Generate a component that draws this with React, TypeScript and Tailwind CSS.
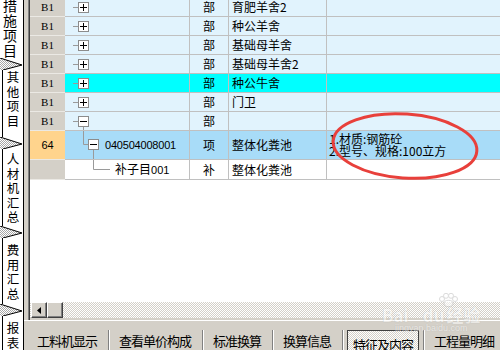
import React, { ReactNode } from 'react';

const cjk = "font-['Noto_Sans_CJK_SC',sans-serif]";
const latin = "font-['Liberation_Sans','Noto_Sans_CJK_SC',sans-serif]";
const dither =
  'bg-[repeating-conic-gradient(#d4d0c8_0%_25%,#ffffff_0%_50%)] bg-[length:2px_2px]';

// little +/- box of the tree column
const Box = ({ x, y, minus }: { x: number; y: number; minus?: boolean }) => (
  <g>
    <rect x={x + 0.5} y={y + 0.5} width={10} height={10} fill="#fff" stroke="#8c8c8c" />
    <line x1={x + 2} x2={x + 9} y1={y + 5.5} y2={y + 5.5} stroke="#000" />
    {!minus && <line x1={x + 5.5} x2={x + 5.5} y1={y + 2} y2={y + 9} stroke="#000" />}
  </g>
);

type TreeKind = 'plus' | 'minus' | 'item' | 'sub';

const Tree = ({ kind, text }: { kind: TreeKind; text?: string }) => {
  const line = '#9a9a9a';
  return (
    <>
      <svg className="absolute left-0 top-0" width={124} height={28}>
        {(kind === 'plus' || kind === 'minus') && (
          <>
            <line x1={8} x2={13} y1={9.5} y2={9.5} stroke={line} />
            {kind === 'minus' && <line x1={18.5} x2={18.5} y1={15} y2={18} stroke={line} />}
            <Box x={13} y={4} minus={kind === 'minus'} />
          </>
        )}
        {kind === 'item' && (
          <>
            <line x1={18.5} x2={18.5} y1={0} y2={13.5} stroke={line} />
            <line x1={18.5} x2={23} y1={13.5} y2={13.5} stroke={line} />
            <line x1={28.5} x2={28.5} y1={19} y2={28} stroke={line} />
            <Box x={23} y={8} minus />
          </>
        )}
        {kind === 'sub' && (
          <>
            <line x1={28.5} x2={28.5} y1={0} y2={9.5} stroke={line} />
            <line x1={28.5} x2={45} y1={9.5} y2={9.5} stroke={line} />
          </>
        )}
      </svg>
      {kind === 'item' && (
        <span className={`relative pl-[40px] text-[11px] tracking-[-0.2px] ${latin}`}>{text}</span>
      )}
      {kind === 'sub' && (
        <span className={`relative pl-[50px] text-[12px] ${cjk}`}>
          补子目<span className={`text-[11px] ${latin}`}>001</span>
        </span>
      )}
    </>
  );
};

type Row = {
  num: string;
  numBg: string;
  bg: string;
  h: string;
  tree: TreeKind;
  code?: string;
  unit: string;
  name: string;
  feat?: ReactNode;
};

const blue = 'bg-[#e1f3fd]';
const rows: Row[] = [
  { num: 'B1', numBg: 'bg-[#d4d0c8]', bg: blue, h: 'h-[19px]', tree: 'plus', unit: '部', name: '育肥羊舍2' },
  { num: 'B1', numBg: 'bg-[#d4d0c8]', bg: blue, h: 'h-[19px]', tree: 'plus', unit: '部', name: '种公羊舍' },
  { num: 'B1', numBg: 'bg-[#d4d0c8]', bg: blue, h: 'h-[19px]', tree: 'plus', unit: '部', name: '基础母羊舍' },
  { num: 'B1', numBg: 'bg-[#d4d0c8]', bg: blue, h: 'h-[19px]', tree: 'plus', unit: '部', name: '基础母羊舍2' },
  { num: 'B1', numBg: 'bg-[#d4d0c8]', bg: 'bg-[#00ffff]', h: 'h-[19px]', tree: 'plus', unit: '部', name: '种公牛舍' },
  { num: 'B1', numBg: 'bg-[#d4d0c8]', bg: blue, h: 'h-[19px]', tree: 'plus', unit: '部', name: '门卫' },
  { num: 'B1', numBg: 'bg-[#d4d0c8]', bg: blue, h: 'h-[19px]', tree: 'minus', unit: '部', name: '' },
  {
    num: '64',
    numBg: 'bg-[#ffd48d]',
    bg: 'bg-[#a8dcf8]',
    h: 'h-[29px]',
    tree: 'item',
    code: '040504008001',
    unit: '项',
    name: '整体化粪池',
    feat: (
      <>
        <span>1.材质:钢筋砼</span>
        <span>2.型号、规格:100立方</span>
      </>
    ),
  },
  { num: '', numBg: 'bg-[#d4d0c8]', bg: 'bg-white', h: 'h-[20px]', tree: 'sub', unit: '补', name: '整体化粪池' },
];

const GridRow = ({ r }: { r: Row }) => (
  <div className={`flex ${r.h}`}>
    <div
      className={`w-[35px] shrink-0 flex items-center justify-center border-b border-[#ebe9e4] ${r.numBg} ${
        r.num === 'B1' ? "font-['Liberation_Serif',serif] text-[11px]" : `${latin} text-[11px]`
      }`}
    >
      {r.num}
    </div>
    <div className={`relative w-[125px] shrink-0 flex items-center border-b border-r border-[#c0c0c0] ${r.bg}`}>
      <Tree kind={r.tree} text={r.code} />
    </div>
    <div className={`w-[39px] shrink-0 flex items-center justify-center border-b border-r border-[#c0c0c0] text-[12px] ${r.bg}`}>
      {r.unit}
    </div>
    <div className={`w-[98px] shrink-0 flex items-center pl-[3px] border-b border-r border-[#c0c0c0] text-[12px] ${r.bg}`}>
      {r.name}
    </div>
    <div className={`flex-1 flex flex-col justify-center pl-[2px] border-b border-[#c0c0c0] text-[12px] leading-[12px] ${r.bg}`}>
      {r.feat}
    </div>
  </div>
);

const Chevron = () => (
  <svg width={23} height={12} className="shrink-0 block">
    <defs>
      <pattern id="dz" width={2} height={2} patternUnits="userSpaceOnUse">
        <rect width={2} height={2} fill="#fff" />
        <rect width={1} height={1} fill="#a8a8a8" />
        <rect x={1} y={1} width={1} height={1} fill="#a8a8a8" />
      </pattern>
    </defs>
    <polygon points="0,0 22,7 3,12 0,12" fill="url(#dz)" />
    <line x1={0} y1={0} x2={22} y2={7} stroke="#000" />
    <line x1={22} y1={7} x2={3} y2={12} stroke="#000" />
  </svg>
);

const SideTab = ({ text, h, pt }: { text: string; h: string; pt: string }) => (
  <div className={`${h} shrink-0 ml-[2px] border-l border-black flex flex-col items-center ${pt} text-[12.5px] leading-[14.5px]`}>
    {text.split('').map((c, i) => (
      <span key={i}>{c}</span>
    ))}
  </div>
);

const SideTabs = () => (
  <div className="w-[24px] h-full shrink-0 flex flex-col overflow-hidden bg-white border-r border-black">
    <div className="h-[58px] shrink-0 flex flex-col items-center -mt-[2px] pr-[3px] text-[14px] leading-[15px]">
      {'措施项目'.split('').map((c, i) => (
        <span key={i}>{c}</span>
      ))}
    </div>
    <div className="h-[2px] shrink-0" />
    <Chevron />
    <SideTab text="其他项目" h="h-[67px]" pt="pt-0" />
    <Chevron />
    <SideTab text="人材机汇总" h="h-[77px]" pt="pt-[3px]" />
    <Chevron />
    <SideTab text="费用汇总" h="h-[66px]" pt="pt-[5px]" />
    <Chevron />
    <SideTab text="报表" h="h-[40px]" pt="pt-[5px]" />
  </div>
);

const raised =
  'border border-t-white border-l-white border-b-[#404040] border-r-[#404040] bg-[#d4d0c8] shadow-[inset_-1px_-1px_0_#808080]';

const Scrollbar = () => (
  <div className={`h-[16px] shrink-0 flex pl-[1px] ${dither}`}>
    <div className={`w-[16px] h-full flex items-center justify-center ${raised}`}>
      <svg width={4} height={7}>
        <polygon points="4,0 0,3.5 4,7" fill="#000" />
      </svg>
    </div>
    <div className={`w-[16px] h-full ${raised}`} />
  </div>
);

const Sep = ({ ml = 'ml-[11px]', mr = 'mr-[9px]' }: { ml?: string; mr?: string }) => (
  <div className={`w-[2px] h-[20px] shrink-0 border-l border-[#808080] border-r border-r-white ${ml} ${mr}`} />
);

const TabText = ({ t }: { t: string }) => (
  <span className="h-[19px] leading-[19px] text-[13px] tracking-[-1px] whitespace-nowrap">{t}</span>
);

const BottomTabs = () => (
  <div className="h-[29px] flex items-end pl-[13px] overflow-hidden">
    <TabText t="工料机显示" />
    <Sep />
    <TabText t="查看单价构成" />
    <Sep />
    <TabText t="标准换算" />
    <Sep />
    <TabText t="换算信息" />
    <Sep mr="mr-[3px]" />
    <div className={`h-[20px] px-[5px] border border-b-0 border-[#404040] ${dither}`}>
      <TabText t="特征及内容" />
    </div>
    <Sep ml="ml-[4px]" />
    <TabText t="工程量明细" />
  </div>
);

export default function App() {
  return (
    <div className={`relative w-[500px] h-[350px] overflow-hidden flex bg-white text-black ${cjk}`}>
      <SideTabs />
      <div className="flex-1 min-w-0 flex flex-col bg-[#d4d0c8]">
        <div className="h-[320px] shrink-0 flex pl-[4px]">
          <div className="w-px bg-[#808080]" />
          <div className="w-px bg-[#404040]" />
          <div className="flex-1 min-w-0 flex flex-col bg-white">
            <div className="-mt-[2px] flex flex-col">
              {rows.map((r, i) => (
                <GridRow key={i} r={r} />
              ))}
            </div>
            <div className="flex-1" />
            <Scrollbar />
            <div className="h-[2px] bg-[#d4d0c8]" />
          </div>
        </div>
        <div className="h-px bg-white" />
        <BottomTabs />
      </div>

      {/* red annotation ellipse */}
      <svg className="absolute left-[326px] top-[106px] pointer-events-none" width={160} height={82}>
        <ellipse cx={79} cy={40} rx={72} ry={32} fill="none" stroke="#e8403b" strokeWidth={3} transform="rotate(4 79 40)" />
      </svg>

      {/* watermark */}
      <div className="absolute left-[382px] top-[293px] flex flex-col items-center pointer-events-none opacity-50">
        <svg width={20} height={14} className="ml-[34px]">
          <g fill="#fff" stroke="#b8b8b8">
            <circle cx={4} cy={6} r={2.5} />
            <circle cx={8} cy={2.8} r={2.5} />
            <circle cx={13} cy={2.8} r={2.5} />
            <circle cx={17} cy={6} r={2.5} />
            <ellipse cx={10.5} cy={10.5} rx={4.5} ry={3.2} />
          </g>
        </svg>
        <div className="text-[17px] leading-[16px] font-bold text-white [text-shadow:0_0_1px_#9a9a9a]">
          Bai<span className="ml-[14px]">du</span>
          <span className="ml-[2px]">经验</span>
        </div>
        <div className={`text-[9px] leading-[10px] text-white [text-shadow:0_0_1px_#9a9a9a] ${latin}`}>jingyan.baidu.com</div>
      </div>
    </div>
  );
}
